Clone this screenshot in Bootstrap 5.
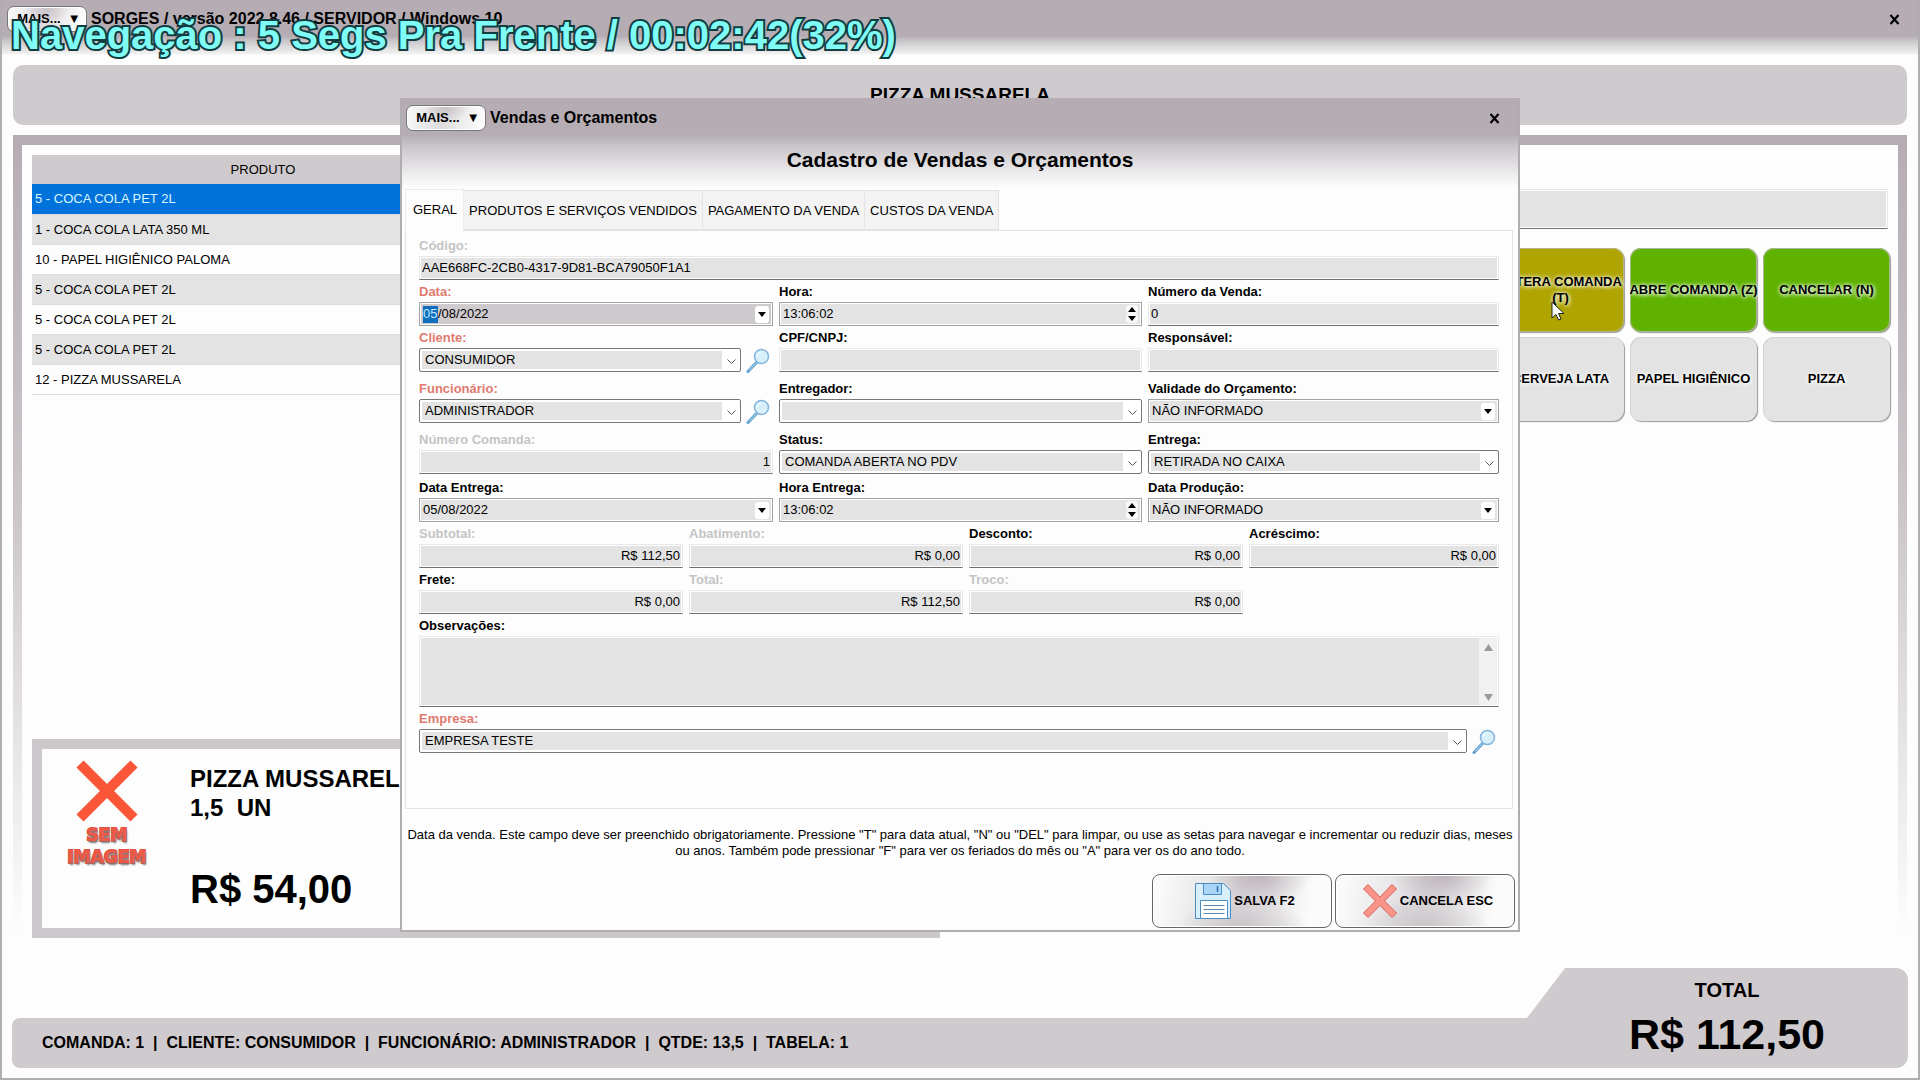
<!DOCTYPE html>
<html lang="pt-BR">
<head>
<meta charset="utf-8">
<meta name="viewport" content="width=device-width, initial-scale=1">
<title>SORGES - Vendas e Orçamentos</title>
<link href="https://cdn.jsdelivr.net/npm/bootstrap@5.3.0/dist/css/bootstrap.min.css" rel="stylesheet">
<script src="https://cdn.jsdelivr.net/npm/bootstrap@5.3.0/dist/js/bootstrap.bundle.min.js"></script>
<style>
  :root { --bar: #b5adb3; --panel: #cfcacd; --field: #e3e3e3; --paper: #fdfdfd; }
  body { font-family: "Liberation Sans", Arial, sans-serif; font-size: 13px; line-height: 16px; color: #000; background: var(--paper); }
  input, select, textarea, button { font: inherit; color: inherit; }
  .app { border: solid #b0adb0; border-width: 0 2px 2px; }
  .app-top { height: 55px; padding: 6px 18px 0 5px; background: linear-gradient(var(--bar) 36px, #c6c3c6 40px, #f3f3f3 54px, var(--paper)); }
  .win-title { font-size: 16px; line-height: 26px; padding-left: 4px; }
  .more { width: 80px; height: 26px; padding: 0 0 0 4px; border: 1px solid #777; border-radius: 7px; box-shadow: inset 0 0 0 1px #fff; font-weight: bold; line-height: 20px;
    background: radial-gradient(ellipse 22px 14px at 50% 10%, #c9c4c8, transparent), linear-gradient(100deg, #fafafa, #dedbde 45%, #fafafa 90%); }
  .x-btn { border: 0; background: none; padding: 0; line-height: 0; }
  .osd { left: 9px; top: 11px; font-size: 40px; line-height: 48px; font-weight: bold; color: #7ffcf6; -webkit-text-stroke: 4px #123c40; paint-order: stroke fill; z-index: 5; }
  .headline { height: 60px; margin: 10px 11px 10px 11px; border-radius: 10px; background: var(--panel); font-size: 19px; }
  .frame { margin: 0 11px 0 11px; padding: 10px 9px; background: linear-gradient(var(--bar), #cbc5ca 45%, var(--paper) 97%); }
  .frame-in { background: var(--paper); padding: 10px 8px 10px 10px; }
  .left-col { flex: 0 0 908px; }
  .goods { width: 100%; }
  .goods th { height: 29px; background: var(--panel); font-weight: normal; text-align: center; padding: 0; }
  .goods th:first-child { width: 462px; }
  .goods td { height: 30px; padding: 1px 3px 0; border-bottom: 1px solid #dcdcdc; }
  .goods tbody tr:nth-child(even) { background: var(--field); }
  .goods tbody tr.picked { background: #0072dc; color: #d9f6ff; }
  .item-box { border: 10px solid #cbc7ca; height: 199px; }
  .item-pic { width: 92px; margin-left: 19px; padding-top: 11px; }
  .no-pic { font-family: "DejaVu Sans", sans-serif; font-size: 17px; line-height: 22px; padding-top: 2px; font-weight: bold; color: #ee5a48; -webkit-text-stroke: 2px #e2503f; paint-order: stroke; text-shadow: 1px 2px 2px #777; }
  .item-txt { margin-left: 37px; font-weight: bold; font-size: 24px; line-height: 29px; padding-top: 15px; white-space: pre; }
  .item-price { font-size: 40px; line-height: 48px; margin-top: 43px; }
  .search-box { height: 40px; width: 100%; border: 1px solid #e6e6e6; border-bottom-color: #6f6f6f; background: var(--field); box-shadow: inset 0 0 0 1px #fff; }
  .search-wrap { padding: 34px 2px 0 0; }
  .tiles { display: grid; grid-template-columns: repeat(3, 127px); gap: 5px 6px; justify-content: end; margin-top: 19px; }
  .tile { height: 84px; padding: 0; border: 0; border-radius: 11px; background: var(--field); font-weight: bold; display: flex; align-items: center; justify-content: center; box-shadow: inset 1px 1px 0 #d4d4d4, 1px 1px 1px #999; text-shadow: 0 0 4px #fff, 1px 1px 4px #fff; }
  .tile-go { background: #5fb200; box-shadow: inset 0 0 0 1px #a9b890, 1px 1px 1px #999; }
  .tile-hot { background: #afa400; box-shadow: inset 0 0 0 1px #b9b380, 1px 1px 1px #999; }
  .cursor { left: 1549px; top: 301px; z-index: 6; }
  .foot { margin: 10px; }
  .foot-info { height: 50px; background: var(--panel); border-radius: 8px 0 0 8px; padding-left: 30px; font-size: 16px; line-height: 50px; font-weight: bold; white-space: pre; }
  .foot-total { width: 381px; height: 100px; padding: 10px 0 0 19px; background: var(--panel); border-radius: 0 12px 12px 0; clip-path: polygon(38px 0, 100% 0, 100% 100%, 0 100%, 0 50%); text-align: center; font-weight: bold; }
  .sum-label { font-size: 20px; line-height: 24px; }
  .sum-value { font-size: 43px; line-height: 50px; margin-top: 7px; }

  .dlg-layer { top: 98px; z-index: 4; }
  .dlg { border: solid #b0adb0; border-width: 0 2px 2px; background: var(--paper); }
  .dlg-top { height: 91px; padding: 7px 18px 0 4px; background: linear-gradient(var(--bar) 37px, #c9c5c9 48px, #f3f2f3 80px, var(--paper)); }
  .dlg-head { font-size: 21px; line-height: 26px; margin: 16px 0 0; text-align: center; font-weight: bold; padding-left: 14px; }
  .tabs { margin-left: 3px; height: 41px; display: flex; align-items: flex-end; list-style: none; padding: 0; margin-bottom: 0; }
  .tabs button { height: 40px; border: 1px solid #e3e3e3; border-left: 0; background: #f3f3f3; padding: 2px 5px 0; }
  .tabs button.on { height: 42px; margin-bottom: -1px; border: 1px solid #ececec; border-bottom: 0; background: var(--paper); padding: 0 6px 2px 7px; position: relative; }
  .sheet { margin: 0 5px 0 3px; border: 1px solid #e3e3e3; padding: 4px 13px 54px; }
  .g3 { display: grid; grid-template-columns: minmax(0, 354fr) minmax(0, 363fr) minmax(0, 351fr); column-gap: 6px; }
  .g4 { display: grid; grid-template-columns: minmax(0, 264fr) minmax(0, 274fr) minmax(0, 274fr) minmax(0, 250fr); column-gap: 6px; }
  .sep-l { margin-bottom: 5px; }
  .sep-s { margin-bottom: 2px; }
  .lb { display: block; height: 21px; line-height: 22px; font-weight: bold; }
  .lb.req { color: #e07a70; }
  .lb.off { color: #c4c4c4; }
  .tx, .cb, .dt, .memo { margin-bottom: 1px; }
  .tx { display: block; width: 100%; height: 24px; border: 1px solid #e8e8e8; border-bottom-color: #6f6f6f; border-radius: 0; background: var(--field); box-shadow: inset 0 0 0 1px #fff; padding: 0 2px 1px; outline: 0; }
  .tx.num { text-align: right; }
  .cb { display: block; width: 100%; height: 24px; border: 1px solid #777; border-radius: 2px; padding: 0 22px 1px 5px; appearance: none; outline: 0;
    background: url("data:image/svg+xml,%3Csvg xmlns='http://www.w3.org/2000/svg' width='9' height='6'%3E%3Cpath d='M.5.5l4 4 4-4' fill='none' stroke='%23555'/%3E%3C/svg%3E") no-repeat right 4px top 10px, linear-gradient(var(--field), var(--field)) no-repeat 2px 2px / calc(100% - 20px) calc(100% - 4px), #fff; }
  .dt { height: 24px; border: 1px solid #a2a2a2; background: var(--field); box-shadow: inset 0 0 0 1px #fff; display: flex; align-items: center; padding: 0 3px; }
  .dt.cur { background: #cfcacd; }
  .dt input { border: 0; padding: 0 0 1px; background: none; height: 17px; outline: 0; min-width: 0; }
  .dt .seg { flex: none; width: 15px; background: #0f6fbd; color: #bfe6ff; }
  .drop { flex: none; width: 14px; height: 17px; border: 0; border-radius: 3px; background: #fff; padding: 0; display: flex; align-items: center; justify-content: center; }
  .spin { flex: none; width: 12px; }
  .spin button { display: flex; align-items: center; justify-content: center; width: 12px; height: 9px; border: 0; border-radius: 3px; background: #f8f8f8; padding: 0; }
  .lens { flex: none; width: 25px; height: 25px; border: 0; background: none; padding: 0; margin: 0 2px 0 5px; }
  .memo { height: 71px; border: 1px solid #e8e8e8; border-bottom-color: #6f6f6f; background: #fff; padding: 1px; }
  .memo textarea { border: 0; resize: none; background: var(--field); outline: 0; }
  .sbar { width: 18px; background: #f1f1f1; padding: 6px 0 4px; }
  .hint { margin: 18px 0 15px; padding: 0 5px; text-align: center; }
  .acts { gap: 3px; padding: 0 3px 2px; }
  .act { width: 180px; height: 54px; border: 1px solid #666; border-radius: 8px; font-weight: bold; padding: 0 0 0 5px; gap: 2px; box-shadow: inset 0 0 0 1px #fff;
    background: radial-gradient(ellipse 50px 34px at 60% 0, #bdb5bc, transparent), radial-gradient(ellipse 64px 34px at 50% 100%, #cac5c9, transparent), linear-gradient(100deg, #fafafa 5%, #dcd9dc 48%, #fbfbfb 88%); }
</style>
</head>
<body>
<svg class="d-none" aria-hidden="true">
  <symbol id="lens" viewBox="0 0 25 25"><path d="M10.500 14.500L2 23.500" stroke="#5f9fd0" stroke-width="3" stroke-linecap="round"/><path d="M10.500 14.500L3 22.500" stroke="#b5dcf5" stroke-width="1"/><circle cx="15.500" cy="8.500" r="7" fill="#d8effc" stroke="#82b4dc" stroke-width="1.500"/><path d="M11 8a4.500 4.500 0 0 1 4-4" stroke="#fff" fill="none"/></symbol>
  <symbol id="close" viewBox="0 0 11 11"><path d="M1.500 1l8 9M9.500 1l-8 9" stroke="#000" stroke-width="2.200"/></symbol>
  <symbol id="down" viewBox="0 0 8 5"><path d="M0 0h8L4 5z"/></symbol>
  <symbol id="up" viewBox="0 0 8 5"><path d="M0 5h8L4 0z"/></symbol>
</svg>

<div class="app min-vh-100 d-flex flex-column position-relative">
  <header class="app-top d-flex align-items-start">
    <button class="more" type="button">MAIS... &nbsp;▼</button>
    <span class="win-title fw-bold flex-fill">SORGES / versão 2022.8.46 / SERVIDOR / Windows 10</span>
    <button class="x-btn mt-2" type="button" aria-label="Fechar"><svg width="11" height="11"><use href="#close"/></svg></button>
  </header>
  <div class="osd position-absolute text-nowrap">Navegação : 5 Segs Pra Frente / 00:02:42(32%)</div>

  <div class="headline d-flex align-items-center justify-content-center fw-bold">PIZZA MUSSARELA</div>

  <main class="frame flex-grow-1 d-flex">
    <div class="frame-in d-flex flex-fill">
      <section class="left-col d-flex flex-column justify-content-between">
        <table class="goods">
          <thead><tr><th>PRODUTO</th><th></th></tr></thead>
          <tbody>
            <tr class="picked"><td>5 - COCA COLA PET 2L</td><td></td></tr>
            <tr><td>1 - COCA COLA LATA 350 ML</td><td></td></tr>
            <tr><td>10 - PAPEL HIGIÊNICO PALOMA</td><td></td></tr>
            <tr><td>5 - COCA COLA PET 2L</td><td></td></tr>
            <tr><td>5 - COCA COLA PET 2L</td><td></td></tr>
            <tr><td>5 - COCA COLA PET 2L</td><td></td></tr>
            <tr><td>12 - PIZZA MUSSARELA</td><td></td></tr>
          </tbody>
        </table>
        <div class="item-box d-flex">
          <div class="item-pic text-center">
            <svg width="62" height="62" viewBox="0 0 62 62"><path d="M4 4l54 54M58 4L4 58" stroke="#fb5637" stroke-width="10"/></svg>
            <div class="no-pic">SEM<br>IMAGEM</div>
          </div>
          <div class="item-txt"><div>PIZZA MUSSARELA</div><div>1,5  UN</div><div class="item-price">R$ 54,00</div></div>
        </div>
      </section>
      <section class="flex-fill">
        <div class="search-wrap"><input class="search-box d-block" type="text" aria-label="Pesquisa"></div>
        <div class="tiles">
          <button class="tile tile-hot" type="button">ALTERA COMANDA (T)</button>
          <button class="tile tile-go text-nowrap" type="button">ABRE COMANDA (Z)</button>
          <button class="tile tile-go" type="button">CANCELAR (N)</button>
          <button class="tile" type="button">CERVEJA LATA</button>
          <button class="tile" type="button">PAPEL HIGIÊNICO</button>
          <button class="tile" type="button">PIZZA</button>
        </div>
      </section>
    </div>
  </main>

  <footer class="foot d-flex align-items-end">
    <div class="foot-info flex-fill">COMANDA: 1  |  CLIENTE: CONSUMIDOR  |  FUNCIONÁRIO: ADMINISTRADOR  |  QTDE: 13,5  |  TABELA: 1</div>
    <div class="foot-total"><div class="sum-label">TOTAL</div><div class="sum-value">R$ 112,50</div></div>
  </footer>

  <svg class="cursor position-absolute" width="14" height="20" viewBox="0 0 14 20"><path d="M1 1v16l4-3.500 2.500 5.500 2.500-1-2.500-5.500H13z" fill="#fff" stroke="#222"/></svg>
</div>

<div class="dlg-layer position-absolute w-100 row g-0 justify-content-center">
  <form class="dlg col-7" role="dialog" aria-labelledby="dlgTitle">
    <div class="dlg-top">
      <div class="d-flex align-items-start">
        <button class="more" type="button">MAIS... &nbsp;▼</button>
        <span class="win-title fw-bold flex-fill">Vendas e Orçamentos</span>
        <button class="x-btn mt-2" type="button" aria-label="Fechar"><svg width="11" height="11"><use href="#close"/></svg></button>
      </div>
      <h1 class="dlg-head" id="dlgTitle">Cadastro de Vendas e Orçamentos</h1>
    </div>
    <ul class="tabs" role="tablist">
      <li><button class="on" type="button" role="tab">GERAL</button></li>
      <li><button type="button" role="tab">PRODUTOS E SERVIÇOS VENDIDOS</button></li>
      <li><button type="button" role="tab">PAGAMENTO DA VENDA</button></li>
      <li><button type="button" role="tab">CUSTOS DA VENDA</button></li>
    </ul>
    <div class="sheet">
      <label class="lb off" for="cod">Código:</label>
      <input class="tx" id="cod" value="AAE668FC-2CB0-4317-9D81-BCA79050F1A1" readonly>

      <div class="g3">
        <div><label class="lb req" for="dia">Data:</label>
          <div class="dt cur"><input class="seg" id="dia" value="05"><input class="flex-fill" value="/08/2022" aria-label="Mês e ano"><button class="drop" type="button" aria-label="Calendário"><svg width="8" height="5"><use href="#down"/></svg></button></div></div>
        <div><label class="lb" for="hora">Hora:</label>
          <div class="dt"><input class="flex-fill" id="hora" value="13:06:02"><div class="spin"><button type="button" aria-label="Mais"><svg width="8" height="5"><use href="#up"/></svg></button><button type="button" aria-label="Menos"><svg width="8" height="5"><use href="#down"/></svg></button></div></div></div>
        <div><label class="lb" for="nv">Número da Venda:</label><input class="tx" id="nv" value="0"></div>
      </div>

      <div class="g3 sep-l">
        <div><label class="lb req" for="cli">Cliente:</label>
          <div class="d-flex"><select class="cb" id="cli"><option>CONSUMIDOR</option></select><button class="lens" type="button" aria-label="Buscar cliente"><svg width="25" height="25"><use href="#lens"/></svg></button></div></div>
        <div><label class="lb" for="cpf">CPF/CNPJ:</label><input class="tx" id="cpf"></div>
        <div><label class="lb" for="resp">Responsável:</label><input class="tx" id="resp"></div>
      </div>

      <div class="g3 sep-l">
        <div><label class="lb req" for="fun">Funcionário:</label>
          <div class="d-flex"><select class="cb" id="fun"><option>ADMINISTRADOR</option></select><button class="lens" type="button" aria-label="Buscar funcionário"><svg width="25" height="25"><use href="#lens"/></svg></button></div></div>
        <div><label class="lb" for="ent">Entregador:</label><select class="cb" id="ent"><option></option></select></div>
        <div><label class="lb" for="val">Validade do Orçamento:</label>
          <div class="dt"><input class="flex-fill" id="val" value="NÃO INFORMADO"><button class="drop" type="button" aria-label="Calendário"><svg width="8" height="5"><use href="#down"/></svg></button></div></div>
      </div>

      <div class="g3 sep-s">
        <div><label class="lb off" for="nc">Número Comanda:</label><input class="tx num" id="nc" value="1" readonly></div>
        <div><label class="lb" for="sta">Status:</label><select class="cb" id="sta"><option>COMANDA ABERTA NO PDV</option></select></div>
        <div><label class="lb" for="etg">Entrega:</label><select class="cb" id="etg"><option>RETIRADA NO CAIXA</option></select></div>
      </div>

      <div class="g3">
        <div><label class="lb" for="de">Data Entrega:</label>
          <div class="dt"><input class="flex-fill" id="de" value="05/08/2022"><button class="drop" type="button" aria-label="Calendário"><svg width="8" height="5"><use href="#down"/></svg></button></div></div>
        <div><label class="lb" for="he">Hora Entrega:</label>
          <div class="dt"><input class="flex-fill" id="he" value="13:06:02"><div class="spin"><button type="button" aria-label="Mais"><svg width="8" height="5"><use href="#up"/></svg></button><button type="button" aria-label="Menos"><svg width="8" height="5"><use href="#down"/></svg></button></div></div></div>
        <div><label class="lb" for="dp">Data Produção:</label>
          <div class="dt"><input class="flex-fill" id="dp" value="NÃO INFORMADO"><button class="drop" type="button" aria-label="Calendário"><svg width="8" height="5"><use href="#down"/></svg></button></div></div>
      </div>

      <div class="g4">
        <div><label class="lb off" for="sub">Subtotal:</label><input class="tx num" id="sub" value="R$ 112,50" readonly></div>
        <div><label class="lb off" for="aba">Abatimento:</label><input class="tx num" id="aba" value="R$ 0,00" readonly></div>
        <div><label class="lb" for="des">Desconto:</label><input class="tx num" id="des" value="R$ 0,00"></div>
        <div><label class="lb" for="acr">Acréscimo:</label><input class="tx num" id="acr" value="R$ 0,00"></div>
        <div><label class="lb" for="fre">Frete:</label><input class="tx num" id="fre" value="R$ 0,00"></div>
        <div><label class="lb off" for="tot">Total:</label><input class="tx num" id="tot" value="R$ 112,50" readonly></div>
        <div><label class="lb off" for="tro">Troco:</label><input class="tx num" id="tro" value="R$ 0,00" readonly></div>
      </div>

      <label class="lb" for="obs">Observações:</label>
      <div class="memo d-flex">
        <textarea class="flex-fill" id="obs"></textarea>
        <div class="sbar d-flex flex-column justify-content-between align-items-center">
          <svg width="9" height="7" viewBox="0 0 8 5" preserveAspectRatio="none" fill="#9a9a9a"><use href="#up"/></svg>
          <svg width="9" height="7" viewBox="0 0 8 5" preserveAspectRatio="none" fill="#9a9a9a"><use href="#down"/></svg>
        </div>
      </div>

      <label class="lb req" for="emp">Empresa:</label>
      <div class="d-flex"><select class="cb" id="emp"><option>EMPRESA TESTE</option></select><button class="lens" type="button" aria-label="Buscar empresa"><svg width="25" height="25"><use href="#lens"/></svg></button></div>
    </div>

    <p class="hint">Data da venda. Este campo deve ser preenchido obrigatoriamente. Pressione "T" para data atual, "N" ou "DEL" para limpar, ou use as setas para navegar e incrementar ou reduzir dias, meses ou anos. Também pode pressionar "F" para ver os feriados do mês ou "A" para ver os do ano todo.</p>

    <div class="acts d-flex justify-content-end">
      <button class="act d-flex align-items-center justify-content-center" type="button">
        <svg width="38" height="38" viewBox="0 0 38 38"><path d="M1.500 1.500h28l7 7v28h-35z" fill="#d9eefb" stroke="#4a8cc4"/><path d="M9.500 1.500h18v11h-18z" fill="#a9d6f6" stroke="#4a8cc4"/><path d="M23.500 4v6" stroke="#2f70ad" stroke-width="1.500"/><path d="M6.500 18.500h27v18h-27z" fill="#fff" stroke="#4a8cc4"/><path d="M9.500 23.500h21M9.500 27.500h21M9.500 31.500h21" stroke="#5f86a6"/></svg>
        <span>SALVA F2</span>
      </button>
      <button class="act d-flex align-items-center justify-content-center" type="button">
        <svg width="36" height="36" viewBox="0 0 36 36"><path d="M6 1.500l12 12.500L30 1.500l4.500 4.500L22.500 18l12 12-4.500 4.500L18 22.500 6 34.500 1.500 30l12-12L1.500 6z" fill="#f9948a" stroke="#d9655d"/></svg>
        <span>CANCELA ESC</span>
      </button>
    </div>
  </form>
</div>
</body>
</html>
